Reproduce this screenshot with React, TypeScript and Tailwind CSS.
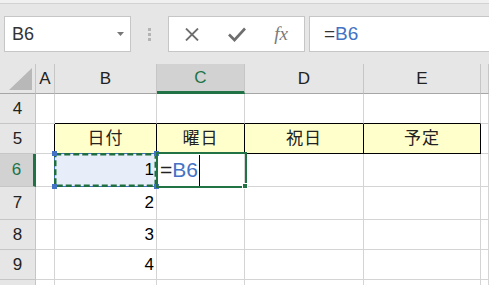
import React from 'react';

const font = "font-['Liberation_Sans','Noto_Sans_CJK_JP',sans-serif]";

const cols = [
  { key: 'A', w: 'w-[19px]' },
  { key: 'B', w: 'w-[102px]' },
  { key: 'C', w: 'w-[88px]' },
  { key: 'D', w: 'w-[119px]' },
  { key: 'E', w: 'w-[117px]' },
  { key: 'F', w: 'flex-1' },
];

const rows = [
  { n: 4, h: 'h-[30px]' },
  { n: 5, h: 'h-[30px]' },
  { n: 6, h: 'h-[33px]' },
  { n: 7, h: 'h-[33px]' },
  { n: 8, h: 'h-[30px]' },
  { n: 9, h: 'h-[30px]' },
  { n: 10, h: 'h-[30px]' },
];

const labels: Record<string, string> = { B: '日付', C: '曜日', D: '祝日', E: '予定' };
const nums: Record<number, number> = { 6: 1, 7: 2, 8: 3, 9: 4 };

const Cell = ({ row, col }: { row: number; col: string }) => {
  const boxed = ['B', 'C', 'D', 'E'].includes(col);
  let cls = 'border-r border-b border-[#d4d4d4] bg-white';
  if (row === 4 && boxed) cls = 'border-r border-b border-[#d4d4d4] border-b-black bg-white';
  if (row === 5 && col === 'A') cls = 'border-r border-b border-[#d4d4d4] border-r-black bg-white';
  if (row === 5 && boxed) cls = 'border-r border-b border-black bg-[#ffffcc]';
  if (row === 6 && col === 'B') cls = 'border-r border-b border-[#d4d4d4] bg-[#e8eef9]';

  return (
    <div className={`${cols.find((c) => c.key === col)!.w} h-full ${cls} flex items-center`}>
      {row === 5 && boxed && (
        <span className="w-full text-center text-[17px] text-[#222] tracking-[1px]">{labels[col]}</span>
      )}
      {col === 'B' && nums[row] !== undefined && (
        <span className="w-full text-right pr-[2px] text-[17px] text-black">{nums[row]}</span>
      )}
      {row === 6 && col === 'C' && (
        <div className="flex items-center pl-[3px] h-full">
          <span className="text-[21px] text-[#222]">=</span>
          <span className="text-[21px] text-[#4472c4]">B6</span>
          <span className="ml-[1px] w-px h-[31px] bg-black" />
        </div>
      )}
    </div>
  );
};

export default function App() {
  return (
    <div className={`relative w-[489px] h-[285px] overflow-hidden bg-[#e6e6e6] ${font}`}>
      {/* ribbon edge */}
      <div className="h-[4px] bg-[#f0f0f0] border-b border-[#d2d2d2]" />

      {/* formula bar */}
      <div className="h-[60px] flex items-start pt-[12px] pl-[4px]">
        <div className="w-[127px] h-[36px] bg-white border border-[#c6c6c6] flex items-center justify-between pl-[7px] pr-[6px]">
          <span className="text-[18px] text-[#333]">B6</span>
          <svg width="7" height="4" viewBox="0 0 7 4">
            <path d="M0 0 L7 0 L3.5 4 Z" fill="#777" />
          </svg>
        </div>
        <div className="w-[37px] h-[36px] flex flex-col items-center justify-center gap-[2px]">
          <span className="w-[3px] h-[3px] bg-[#b4b4b4]" />
          <span className="w-[3px] h-[3px] bg-[#b4b4b4]" />
          <span className="w-[3px] h-[3px] bg-[#b4b4b4]" />
        </div>
        <div className="w-[137px] h-[36px] bg-white border border-[#c6c6c6] flex items-center">
          <div className="w-[45px] flex justify-center">
            <svg width="14" height="13" viewBox="0 0 14 13">
              <path d="M1 0.5 L13 12.5 M13 0.5 L1 12.5" stroke="#6e6e6e" strokeWidth="1.8" />
            </svg>
          </div>
          <div className="w-[46px] flex justify-center">
            <svg width="18" height="15" viewBox="0 0 18 15">
              <path d="M1 7.5 L6.5 13 L17 1.5" stroke="#6e6e6e" strokeWidth="2.6" fill="none" />
            </svg>
          </div>
          <div className="flex-1 flex justify-center pr-[2px]">
            <span className="font-['Liberation_Serif',serif] italic text-[19px] text-[#7a7a7a]">fx</span>
          </div>
        </div>
        <div className="ml-[4px] flex-1 h-[36px] bg-white border border-r-0 border-[#c6c6c6] flex items-center pl-[14px]">
          <span className="text-[19px] text-[#333]">=</span>
          <span className="text-[19px] text-[#4472c4]">B6</span>
        </div>
      </div>

      {/* column headers */}
      <div className="flex h-[30px]">
        <div className="w-[36px] h-full border-r border-b border-[#c6c6c6] border-b-[#a6a6a6] flex items-end justify-end pr-[3px] pb-[3px]">
          <svg width="23" height="22" viewBox="0 0 23 22">
            <path d="M0 22 L23 22 L23 0 Z" fill="#b8b8b8" />
          </svg>
        </div>
        {cols.map((c) =>
          c.key === 'C' ? (
            <div
              key={c.key}
              className={`${c.w} h-full bg-[#d2d2d2] border-r border-[#c6c6c6] border-b-[3px] border-b-[#217346] flex items-center justify-center text-[17px] text-[#217346]`}
            >
              {c.key}
            </div>
          ) : (
            <div
              key={c.key}
              className={`${c.w} h-full border-r border-b border-[#c6c6c6] border-b-[#a6a6a6] flex items-center justify-center text-[17px] text-[#222]`}
            >
              {c.key === 'F' ? '' : c.key}
            </div>
          )
        )}
      </div>

      {/* rows */}
      {rows.map((r) => (
        <div key={r.n} className={`flex ${r.h}`}>
          {r.n === 6 ? (
            <div className="w-[36px] h-full bg-[#d2d2d2] border-r-[3px] border-b border-[#217346] border-b-[#c6c6c6] flex items-center justify-center text-[17px] text-[#217346]">
              {r.n}
            </div>
          ) : (
            <div className="w-[36px] h-full border-r border-b border-[#c6c6c6] flex items-center justify-center text-[17px] text-[#222]">
              {r.n === 10 ? '' : r.n}
            </div>
          )}
          {cols.map((c) => (
            <Cell key={c.key} row={r.n} col={c.key} />
          ))}
        </div>
      ))}

      {/* copy marquee around B6 */}
      <svg className="absolute left-[51px] top-[150px]" width="108" height="40" viewBox="0 0 108 40">
        <rect x="3.5" y="3.5" width="102" height="33" fill="none" stroke="#4472c4" strokeWidth="1" />
        <rect x="4.25" y="4.25" width="100.5" height="31.5" fill="none" stroke="#1f6e41" strokeWidth="2.5" strokeDasharray="6 3" />
        <rect x="1" y="1" width="5" height="5" fill="#4472c4" />
        <rect x="103" y="1" width="5" height="5" fill="#4472c4" />
        <rect x="1" y="34" width="5" height="5" fill="#4472c4" />
        <rect x="103" y="34" width="5" height="5" fill="#4472c4" />
      </svg>

      {/* active cell C6 */}
      <div className="absolute left-[156px] top-[152px] w-[91px] h-[36px] border-2 border-[#217346]" />
      <div className="absolute left-[242px] top-[183px] w-[6px] h-[6px] bg-[#217346] border border-white" />
    </div>
  );
}
